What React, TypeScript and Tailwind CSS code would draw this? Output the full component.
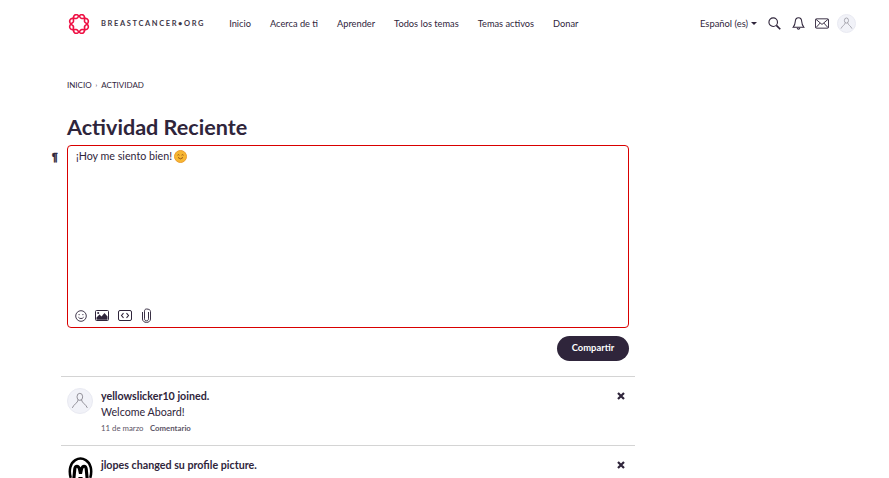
import React from "react";

const nav = ["Inicio", "Acerca de ti", "Aprender", "Todos los temas", "Temas activos", "Donar"];

function wave(phase: number) {
  const pts: string[] = [];
  for (let i = 0; i <= 96; i++) {
    const a = (i / 96) * Math.PI * 2;
    const r = 8 + 1.9 * Math.sin(4 * a + phase);
    pts.push(`${(11 + r * Math.cos(a)).toFixed(2)} ${(11 + r * Math.sin(a)).toFixed(2)}`);
  }
  return "M" + pts.join("L") + "Z";
}

function Logo() {
  return (
    <svg width="22" height="22" viewBox="0 0 22 22" fill="none" stroke="#ee1144" strokeWidth="1.6">
      <path d={wave(0)} />
      <path d={wave(Math.PI)} />
    </svg>
  );
}

function Person({ size }: { size: number }) {
  return (
    <div className="rounded-full bg-[#f1f2f8] border border-[#e9eaf2] flex items-center justify-center shrink-0" style={{ width: size, height: size }}>
      <svg width={size * 0.68} height={size * 0.68} viewBox="0 0 20 20" fill="none" stroke="#86848d" strokeWidth="1">
        <ellipse cx="10" cy="5.5" rx="3.2" ry="4" />
        <path d="M8.2 8.8 C7.5 12.5 3 14 1.5 18 M11.8 8.8 C12.5 12.5 17 14 18.5 18" />
      </svg>
    </div>
  );
}

function Close() {
  return (
    <svg width="8" height="8" viewBox="0 0 8 8" className="mt-[4px] shrink-0" stroke="#2f253b" strokeWidth="2.2">
      <path d="M1 1 L7 7 M7 1 L1 7" />
    </svg>
  );
}

function SearchIcon() {
  return (
    <svg width="13" height="13" viewBox="0 0 14 14" fill="none" stroke="#2f253b" className="ml-[11px]">
      <circle cx="5.6" cy="5.6" r="4.6" strokeWidth="1.2" />
      <path d="M9 9 L13.2 13.2" strokeWidth="1.8" />
    </svg>
  );
}

function BellIcon() {
  return (
    <svg width="13" height="15" viewBox="0 0 14 15" fill="none" stroke="#2f253b" strokeWidth="1.1" className="ml-[11px]">
      <path d="M7 1.2 C4.4 1.2 3.6 3.2 3.5 5.5 C3.4 8.2 2.6 10 1.2 11.6 H12.8 C11.4 10 10.6 8.2 10.5 5.5 C10.4 3.2 9.6 1.2 7 1.2 Z" />
      <path d="M5.6 12.6 C5.9 14 8.1 14 8.4 12.6" strokeWidth="1.3" />
    </svg>
  );
}

function MailIcon() {
  return (
    <svg width="14" height="11" viewBox="0 0 15 11" fill="none" stroke="#2f253b" strokeWidth="1" className="ml-[10px]">
      <rect x="0.5" y="0.5" width="14" height="10" rx="1" />
      <path d="M1 1 L7.5 6.5 L14 1 M1 10 L5.5 5 M14 10 L9.5 5" />
    </svg>
  );
}

function SmileIcon() {
  return (
    <svg width="12" height="12" viewBox="0 0 12 12" fill="none" stroke="#2f253b" strokeWidth="0.9">
      <circle cx="6" cy="6" r="5.3" />
      <circle cx="4.1" cy="4.6" r="0.6" fill="#2f253b" stroke="none" />
      <circle cx="7.9" cy="4.6" r="0.6" fill="#2f253b" stroke="none" />
      <path d="M3.4 7.2 C4.4 9 7.6 9 8.6 7.2" />
    </svg>
  );
}

function PictureIcon() {
  return (
    <svg width="14" height="11" viewBox="0 0 14 11" fill="none" stroke="#2f253b" strokeWidth="1">
      <rect x="0.5" y="0.5" width="13" height="10" rx="1" />
      <path d="M1.5 9.8 L1.5 7.5 L4.5 4.5 L6.5 6.5 L9.5 3 L12.5 6.5 L12.5 9.8 Z" fill="#2f253b" stroke="none" />
      <circle cx="3.2" cy="3" r="1" fill="#2f253b" stroke="none" />
    </svg>
  );
}

function CodeBoxIcon() {
  return (
    <svg width="14" height="11" viewBox="0 0 14 11" fill="none" stroke="#2f253b" strokeWidth="1">
      <rect x="0.5" y="0.5" width="13" height="10" rx="1.5" />
      <path d="M5.5 3.2 L3.5 5.5 L5.5 7.8 M8.5 3.2 L10.5 5.5 L8.5 7.8" strokeWidth="1.1" />
    </svg>
  );
}

function ClipIcon() {
  return (
    <svg width="11" height="15" viewBox="0 0 11 15" fill="none" stroke="#3a3145" strokeWidth="1">
      <path d="M7.5 4 V10.8 C7.5 12 6.7 12.8 5.5 12.8 C4.3 12.8 3.5 12 3.5 10.8 V3.2 C3.5 1.8 4.3 1 5.5 1 C7.9 1 9.5 2 9.5 3.4 V11 C9.5 13 7.8 14.4 5.5 14.4 C3.2 14.4 1.5 13 1.5 11 V4" />
    </svg>
  );
}

function Monogram() {
  return (
    <svg width="25" height="25" viewBox="0 0 24 24" fill="none" stroke="#000" className="shrink-0">
      <path d="M2.6 20 C0.6 13 2 6 7 3 C10 1.2 14 1.2 17 3 C22 6 23.4 13 21.4 20" strokeWidth="2.4" />
      <path d="M5.5 22 L6.5 11.5 C7 8 10 8 11 11.5 L12 16 L13 11.5 C14 8 17 8 17.5 11.5 L18.5 22" strokeWidth="3" />
      <path d="M1 22.8 H9 M15 22.8 H23 M10 20 H14" strokeWidth="1.4" />
    </svg>
  );
}

export default function App() {
  return (
    <div className="w-[889px] h-[478px] overflow-hidden bg-white text-[#2f253b] relative" style={{ fontFamily: "Lato, sans-serif" }}>
      <header className="h-[47px] pl-[68px] pr-[33px] flex items-center">
        <Logo />
        <span className="ml-[11px] text-[7.5px] font-bold tracking-[0.215em] whitespace-nowrap text-[#3f3849]">BREASTCANCER•ORG</span>
        <nav className="ml-[24px] flex gap-[19px] text-[9.25px] leading-[14px] mt-[1px] whitespace-nowrap">
          {nav.map((n) => (
            <span key={n}>{n}</span>
          ))}
        </nav>
        <div className="ml-auto flex items-center">
          <span className="text-[9.4px] leading-[14px] mt-[1px] whitespace-nowrap">Español (es)</span>
          <span className="ml-[3px] w-0 h-0 border-x-[3px] border-x-transparent border-t-[3px] border-t-[#2f253b]" />
          <SearchIcon />
          <BellIcon />
          <MailIcon />
          <div className="ml-[8px]"><Person size={19} /></div>
        </div>
      </header>

      <main className="pl-[67px] w-[629px] box-content">
        <div className="mt-[33px] text-[8px] leading-[10px] flex items-center gap-[3.5px] uppercase">
          <span>Inicio</span><span className="text-[6px] mx-[0.5px]">›</span><span>Actividad</span>
        </div>
        <h1 className="mt-[24px] text-[21.6px] leading-[26px] font-bold">Actividad Reciente</h1>

        <div className="relative mt-[5px] h-[183px] w-[562px] border border-[#d90000] rounded-[4px] pl-[8px] pt-[3px] flex flex-col">
          <span className="absolute left-[-16px] top-[5px] text-[10px] font-bold leading-[14px] [-webkit-text-stroke:0.5px_#2f253b]" style={{ fontFamily: '"Liberation Sans", sans-serif' }}>¶</span>
          <div className="text-[10.7px] leading-[14px] flex items-center gap-[2px]">
            ¡Hoy me siento bien!
            <span className="w-[13px] h-[13px] rounded-full bg-[#f7b733] border border-[#eb9c2e] inline-flex items-center justify-center">
              <svg width="9" height="9" viewBox="0 0 9 9" fill="none" stroke="#8a4b12" strokeWidth="0.9">
                <path d="M1.5 3.2 Q2.5 2.2 3.4 3.2 M5.6 3.2 Q6.5 2.2 7.5 3.2 M2 5.5 Q4.5 8.2 7 5.5" />
              </svg>
            </span>
          </div>
          <div className="mt-auto mb-[4px] -ml-[1px] flex items-center">
            <SmileIcon />
            <span className="ml-[8px] flex"><PictureIcon /></span>
            <span className="ml-[9px] flex"><CodeBoxIcon /></span>
            <span className="ml-[9px] flex"><ClipIcon /></span>
          </div>
        </div>

        <div className="mt-[8px] w-[562px] flex justify-end">
          <button className="w-[72px] h-[25px] rounded-full bg-[#2f253b] text-white text-[9.4px] font-bold">Compartir</button>
        </div>
      </main>

      <section className="ml-[61px] mt-[15px] w-[574px]">
        <div className="border-t border-[#d4d4d4] h-[69px] pl-[6px] pr-[10px] pt-[11px] flex">
          <Person size={26} />
          <div className="ml-[8px] flex-1">
            <div className="text-[10.7px] leading-[15px] font-bold">yellowslicker10 joined.</div>
            <div className="text-[10.7px] leading-[15px] mt-[1px]">Welcome Aboard!</div>
            <div className="text-[7.8px] leading-[10px] mt-[4px] text-[#5c5566] flex gap-[6.5px]">
              <span>11 de marzo</span><span className="font-bold">Comentario</span>
            </div>
          </div>
          <Close />
        </div>
        <div className="border-t border-[#d4d4d4] pl-[7px] pr-[10px] pt-[11px] flex">
          <Monogram />
          <div className="ml-[8px] flex-1 text-[10.7px] leading-[15px] font-bold">jlopes changed su profile picture.</div>
          <Close />
        </div>
      </section>
    </div>
  );
}
